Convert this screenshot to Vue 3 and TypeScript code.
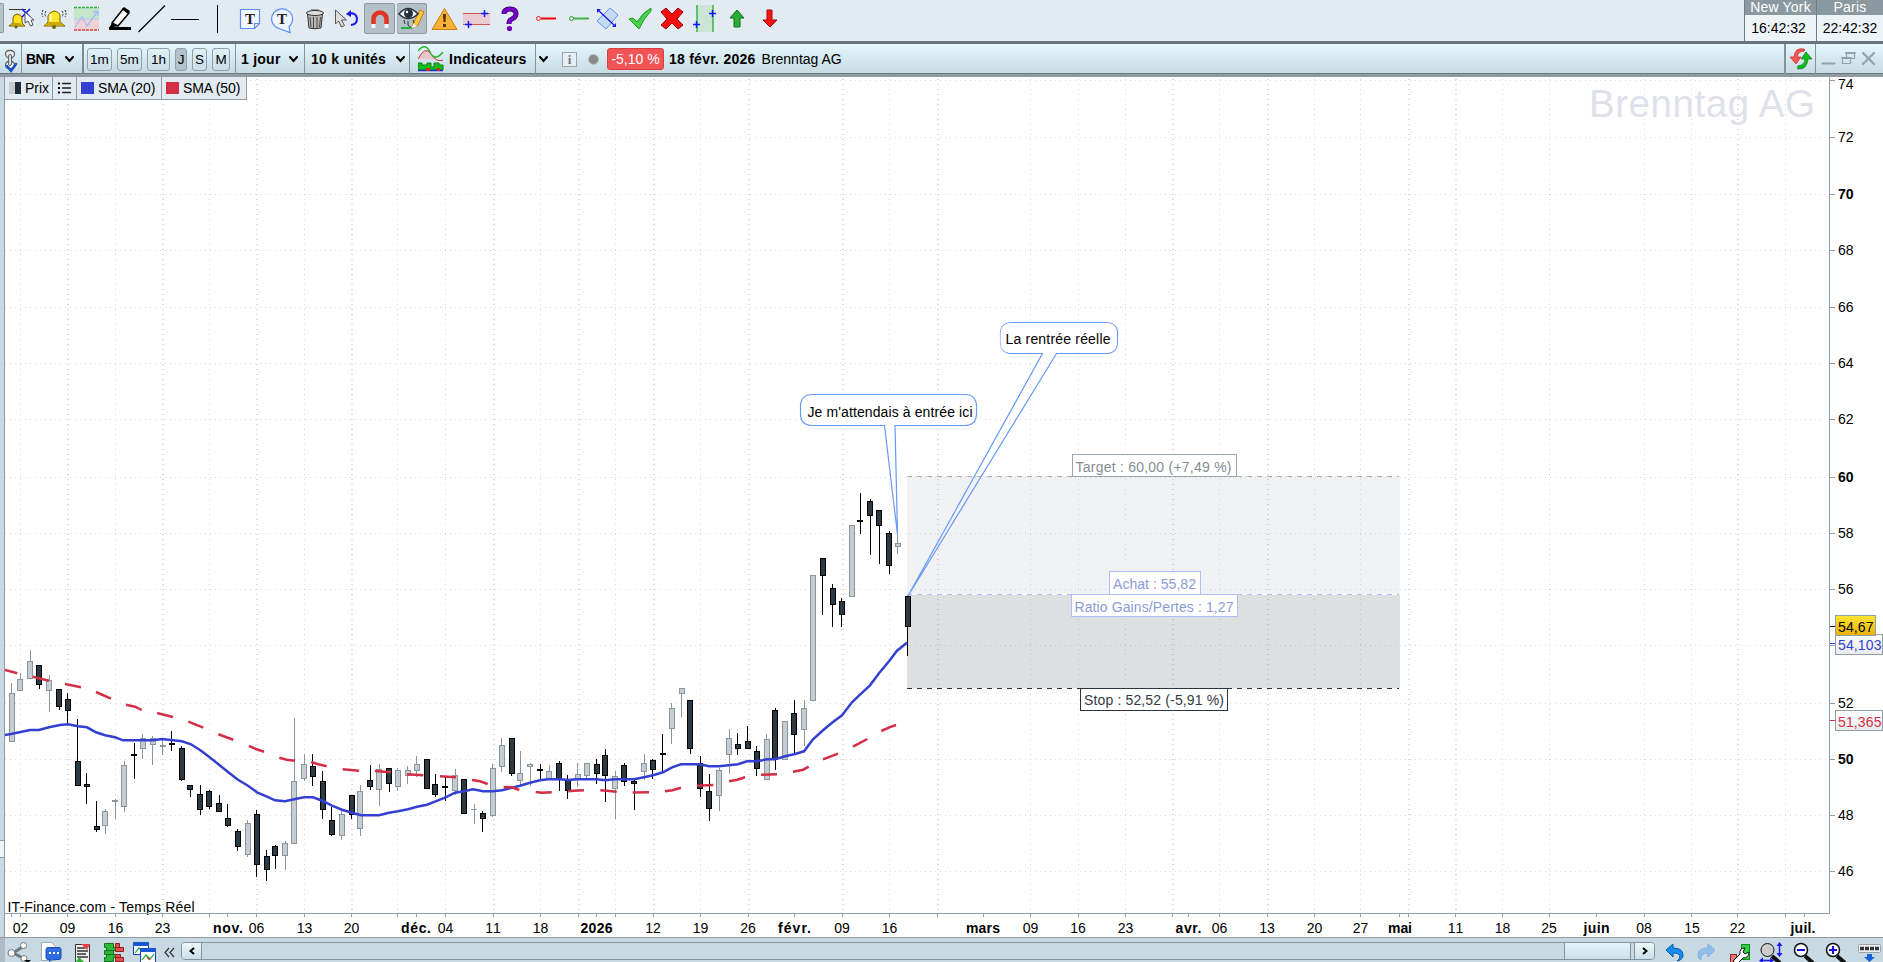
<script setup lang="ts">
type Candle = [left: number, wick: number, high: number, top: number, bottom: number, low: number, up: 0 | 1]
type Label = { x: number; text: string; bold?: boolean; w: number }

const candles: Candle[] = [
  [9, 11, 683, 693, 742, 742, 1], [17, 20, 673, 679, 691, 691, 1], [27, 30, 650, 661, 679, 679, 1],
  [36, 39, 665, 665, 685, 689, 0], [46, 49, 675, 680, 691, 712, 1], [56, 59, 689, 689, 707, 710, 0],
  [65, 67, 693, 699, 711, 724, 0], [75, 77, 719, 761, 786, 786, 0], [84, 86, 773, 784, 787, 804, 0],
  [94, 96, 801, 826, 830, 832, 0], [102, 105, 809, 811, 826, 834, 1], [112, 115, 799, 800, 802, 819, 1],
  [121, 124, 761, 765, 807, 812, 1], [131, 134, 743, 754, 756, 779, 0], [140, 142, 734, 738, 749, 759, 1],
  [150, 152, 736, 738, 745, 765, 1], [160, 162, 738, 745, 747, 755, 1], [169, 171, 731, 743, 745, 751, 0],
  [179, 181, 746, 748, 780, 781, 0], [187, 190, 785, 785, 790, 797, 0], [197, 200, 785, 794, 810, 815, 0],
  [206, 209, 790, 791, 807, 809, 0], [216, 219, 795, 803, 812, 812, 0], [225, 227, 804, 818, 826, 827, 0],
  [235, 237, 829, 831, 847, 851, 0], [245, 247, 820, 823, 855, 857, 1], [254, 256, 810, 814, 865, 877, 0],
  [264, 266, 850, 856, 870, 881, 0], [272, 275, 845, 846, 856, 869, 0], [282, 285, 841, 843, 856, 870, 1],
  [291, 294, 718, 781, 844, 844, 1], [301, 304, 754, 764, 779, 781, 1], [310, 312, 754, 766, 777, 786, 0],
  [320, 322, 771, 781, 810, 819, 0], [329, 331, 807, 820, 835, 836, 0], [339, 341, 811, 814, 836, 840, 1],
  [349, 351, 795, 795, 815, 819, 0], [357, 360, 785, 791, 829, 836, 1], [367, 370, 765, 780, 787, 790, 0],
  [376, 379, 764, 769, 790, 806, 1], [386, 389, 768, 768, 784, 792, 0], [395, 397, 768, 770, 787, 791, 1],
  [405, 407, 766, 770, 776, 784, 1], [414, 416, 756, 764, 771, 777, 1], [424, 426, 759, 759, 789, 789, 0],
  [432, 435, 774, 784, 795, 797, 0], [442, 445, 777, 786, 788, 801, 0], [452, 455, 769, 775, 791, 795, 1],
  [461, 464, 779, 779, 814, 814, 0], [471, 474, 804, 809, 810, 824, 1], [480, 482, 811, 813, 819, 832, 0],
  [490, 492, 764, 768, 816, 817, 1], [499, 501, 738, 745, 767, 772, 1], [509, 511, 738, 738, 774, 776, 0],
  [517, 520, 751, 773, 781, 786, 1], [527, 530, 763, 764, 767, 786, 1], [537, 540, 764, 769, 771, 779, 0],
  [546, 549, 765, 771, 779, 780, 1], [556, 559, 761, 763, 779, 791, 0], [565, 567, 775, 779, 791, 799, 0],
  [575, 577, 763, 774, 780, 787, 1], [584, 586, 763, 763, 776, 780, 1], [594, 596, 759, 764, 774, 784, 0],
  [602, 605, 749, 755, 776, 802, 0], [612, 615, 771, 776, 789, 819, 1], [621, 624, 763, 765, 782, 786, 0],
  [631, 634, 780, 781, 784, 810, 0], [641, 644, 754, 763, 772, 780, 1], [650, 652, 759, 760, 770, 779, 0],
  [660, 662, 734, 753, 755, 772, 0], [669, 671, 703, 708, 729, 744, 1], [679, 681, 688, 688, 694, 717, 1],
  [687, 690, 700, 700, 749, 754, 0], [697, 700, 756, 763, 789, 797, 0], [706, 709, 774, 791, 809, 821, 0],
  [716, 719, 768, 770, 796, 811, 1], [726, 729, 729, 738, 755, 774, 1], [735, 737, 733, 744, 749, 755, 0],
  [745, 747, 726, 741, 749, 749, 0], [754, 756, 746, 751, 769, 776, 0], [764, 766, 734, 739, 780, 780, 1],
  [772, 775, 708, 710, 760, 770, 0], [782, 785, 721, 721, 760, 760, 1], [791, 794, 700, 713, 735, 755, 0],
  [801, 804, 700, 708, 730, 746, 1], [810, 812, 575, 575, 701, 701, 1], [820, 822, 558, 558, 576, 615, 0],
  [830, 832, 584, 588, 605, 627, 0], [839, 841, 598, 601, 615, 627, 0], [849, 851, 525, 525, 597, 597, 1],
  [857, 860, 493, 520, 522, 534, 0], [867, 870, 499, 501, 516, 555, 0], [876, 879, 510, 510, 526, 564, 0],
  [886, 889, 531, 533, 566, 574, 0], [895, 897, 534, 543, 547, 554, 1], [905, 907, 596, 596, 627, 656, 0],
]

const sma20 =
  '5,735 11,734 30,730 39,730 49,727.3 60,725 68,724.3 78,726.3 87,727.3 96,732.3 105,735.3 115,737.3 123,740.3 153,740.3 162,739 182,741.3 191,744.3 200,750 209,756.7 219,764.7 228,772 238,779.7 248,785.7 257,792.3 267,796.7 275,800.3 285,801.3 294,799.3 304,797.3 313,797.3 323,801 332,805.7 342,809.7 352,812.7 361,815.3 379,815.3 389,812.7 398,811.3 408,809.3 417,806.7 427,804.7 435,801.7 445,797.7 455,792.7 464,791.3 473,789.3 483,791.3 493,791.3 502,790.3 520,785.7 530,782.7 540,780.3 548,779.3 560,779.3 568,780 577,779.3 597,779.3 605,780.3 615,779.3 634,779.3 644,777.3 653,775.3 663,772.3 672,767.3 681,764.3 700,764.3 709,766.3 719,766.3 738,764.3 747,761.3 757,761.3 767,759.3 775,759.3 785,756.3 794,754.3 804,751.3 813,739.3 823,730.3 832,722.7 842,715.3 852,702.3 860,694.7 870,685.3 879,673.3 889,661.3 897,650.7 907,642.7'

const sma50 = [
  '5,670 17.3,673.3', '33,676.7 49,680.7', '65,684 81,687.3', '96,692 111,698.7', '126,704.7 135,706.7 141.7,710',
  '157,713 173,717', '188.3,721.7 203.3,727.7', '218.3,734.3 233.3,739.7', '249,746 256.7,749.3 264,751.7',
  '279.3,757.7 286.7,759.7 295,760.7', '311,762 318.3,764.3 326.7,766.3', '342.7,769.3 359,770.7', '375,771 391,772.3',
  '407,774.3 423.3,775.3', '440,776.3 456,777.3', '472,780 480,781.3 487.7,784', '503.7,787 511.7,787.3 519.3,790',
  '535.7,792 541.7,792.7 551.7,792.3', '568.3,791.3 573.3,790.7 584,790.3', '600.3,790.3 606.7,790.7 616.7,791.7',
  '632.7,792.5 649,792.3', '665,791.3 672.3,790.3 681,787.7', '697,785.7 713.3,785', '729,781.3 737.3,779.7 745,777.3',
  '761,774.7 777,774.3', '793,771.7 803.3,769.7 808.7,766.7', '823,759.3 838,753.7', '853,746.7 867.3,739', '881.3,731 889.3,727.3 896,725',
]

const prices = [
  { v: 74, y: 80 }, { v: 72, y: 137 }, { v: 70, y: 194 }, { v: 68, y: 250 }, { v: 66, y: 307 }, { v: 64, y: 363 },
  { v: 62, y: 419 }, { v: 60, y: 477 }, { v: 58, y: 533 }, { v: 56, y: 589 }, { v: 54, y: 645 }, { v: 52, y: 703 },
  { v: 50, y: 759 }, { v: 48, y: 815 }, { v: 46, y: 871 },
]

const thinCols = [20, 115, 209, 304, 397, 445, 540, 615, 700, 889, 1030, 1078, 1125, 1219, 1314, 1360, 1502, 1549, 1644, 1691, 1785]
const wideCols = [67, 162, 256, 351, 493, 578, 653, 748, 842, 937, 1172, 1267, 1408, 1455, 1737]
const gridCols = [
  ...thinCols.map((x) => ({ x, w: 1 })),
  ...wideCols.map((x) => ({ x, w: 2 })),
]

const dates: Label[] = (
  [
    [20.5, '02'], [67.5, '09'], [115.5, '16'], [162.5, '23'], [228, 'nov.', 30], [256.5, '06'], [304.5, '13'], [351.5, '20'],
    [416, 'déc.', 30], [445.5, '04'], [493, '11'], [540.5, '18'], [596.5, '2026', 32], [653, '12'], [700.5, '19'], [748, '26'],
    [794.5, 'févr.', 33], [842, '09'], [889.5, '16'], [983, 'mars', 34], [1030.5, '09'], [1078, '16'], [1125.5, '23'],
    [1188.5, 'avr.', 26], [1219.5, '06'], [1267, '13'], [1314.5, '20'], [1360.5, '27'], [1400, 'mai', 24], [1455.5, '11'],
    [1502.5, '18'], [1549, '25'], [1596.5, 'juin', 26], [1644, '08'], [1692, '15'], [1737.5, '22'], [1803, 'juil.', 25],
  ] as [number, string, number?][]
).map(([x, text, w]) => ({ x, text, bold: !!w, w: w ?? 15.5 }))

const ticks = [11, 20, 67, 115, 162, 209, 227, 256, 304, 351, 397, 416, 445, 493, 540, 578, 596, 615, 653, 700, 748, 794, 842, 889, 937, 983, 1030, 1078, 1125, 1172, 1188, 1219, 1267, 1314, 1360, 1399, 1408, 1455, 1502, 1549, 1596, 1644, 1691, 1737, 1785, 1804]

const periods = [
  { t: '1m', c: 'p-1m' }, { t: '5m', c: 'p-5m' }, { t: '1h', c: 'p-1h' }, { t: 'J', c: 'p-j' }, { t: 'S', c: 'p-s' }, { t: 'M', c: 'p-m' },
]
</script>

<template>
  <div class="app">
    <header class="tools">
      <span class="tab-edge"></span>
      <svg width="33" height="41" viewBox="5 0 33 41">
        <path d="M9 26l4-3v-5q0-3 4-4 5 1 5 4v5l3 3z" fill="#ffe21a" stroke="#6d5a00" />
        <path d="M9 25l4-2h7l3 2z" fill="#c9a400" /><circle cx="16" cy="27" r="1.5" fill="#705c00" />
        <path d="M9 9.500h17" stroke="#333" /><path d="M22 9l8 8M30 9l-8 8" stroke="#1414ff" stroke-width="1.600" />
        <path d="M25 12v11l3-2 2.500 5 2.500-1-2-5h3z" fill="#fff" stroke="#555" />
      </svg>
      <svg width="32" height="41" viewBox="38 0 32 41">
        <path d="M44 26l4-4v-6q1-4 6-5 6 1 6 5v6l5 4z" fill="#ffe52e" stroke="#7b6500" />
        <path d="M44 25l5-3h10l5 3z" fill="#cfa800" /><path d="M50.500 14v7" stroke="#fffbc0" stroke-width="2" /><circle cx="54" cy="27" r="2" fill="#7b6500" />
        <path d="M46 11q-2 3 0 6M43 10q-2 4 0 7M62 11q2 3 0 6M65 10q2 4 0 7" fill="none" stroke="#333" stroke-dasharray="2 1" />
      </svg>
      <svg width="33" height="41" viewBox="70 0 33 41">
        <path d="M74 8h25v11H74z" fill="#c5e6c9" /><path d="M74 19h25v11H74z" fill="#efd2d6" />
        <path d="M74 7.500h25" stroke="#2fb53c" stroke-dasharray="3 1" stroke-width="1.500" /><path d="M74 30h25" stroke="#e84040" stroke-dasharray="3 1" stroke-width="1.500" />
        <path d="M74 19h25" stroke="#aac4f5" stroke-dasharray="3 1" /><path d="M75 27l7-10 5 9 11-15M93 12l5-1 0 5" fill="none" stroke="#a5bdf8" stroke-width="1.300" />
      </svg>
      <svg width="31" height="41" viewBox="103 0 31 41">
        <path d="M112 23l11-14 6 4-11 13z" fill="#fff" stroke="#000" stroke-width="1.500" /><path d="M122 9l2-2 6 4-2 3z" /><path d="M109 28l3-5 6 3zM109 27h22v3h-22z" />
      </svg>
      <svg width="34" height="41" viewBox="134 0 34 41"><path d="M138.500 32l26.500-26.500" stroke="#000" stroke-width="1.300" /></svg>
      <svg width="34" height="41" viewBox="168 0 34 41"><path d="M171 19.500h28" stroke="#000" /></svg>
      <svg width="31" height="41" viewBox="202 0 31 41"><path d="M217.500 5v28" stroke="#000" /></svg>
      <svg width="32" height="41" viewBox="233 0 32 41">
        <path d="M240.500 9.500h19v14l-5 5h-14zM254.500 28.500v-5h5" fill="#f2f7ff" stroke="#5b8df5" stroke-width="1.200" />
        <text x="250" y="24" class="tglyph">T</text>
      </svg>
      <svg width="35" height="41" viewBox="265 0 35 41">
        <path d="M279 28.500a10.500 10 0 1 1 10-2l1 6z" fill="#eef5ff" stroke="#5b8df5" stroke-width="1.200" />
        <text x="282" y="24" class="tglyph">T</text>
      </svg>
      <svg width="30" height="41" viewBox="300 0 30 41">
        <path d="M307.500 14h15l-1.500 14q-6 1.500-12 0z" fill="#b8b8b6" stroke="#333" /><ellipse cx="315" cy="13" rx="8.500" ry="2.500" fill="#ddd" stroke="#333" /><path d="M311 10h8M310 17l1 10M313.500 17v11M317 17v11M320.500 17l-1 10" stroke="#444" fill="none" />
      </svg>
      <svg width="32" height="41" viewBox="330 0 32 41">
        <path d="M335.500 10v14l3-3 3 6 3-1.500-3-5.500h5z" fill="#dcdcdc" stroke="#555" /><path d="M349 13.500q7-1 8 5 0 6-6 6.500" fill="none" stroke="#1717f0" stroke-width="2" /><path d="M346 14l5-4v7z" fill="#1717f0" />
      </svg>
      <svg width="35" height="41" viewBox="362 0 35 41">
        <rect x="364.500" y="3.500" width="30" height="30" rx="1.500" fill="#b3c0c8" stroke="#8d999f" />
        <path d="M373.500 24v-5a6.500 6.500 0 0 1 13 0v5" fill="none" stroke="#e03524" stroke-width="4.500" /><path d="M371.500 24h4v4h-4zM384.500 24h4v4h-4z" fill="#f3f3f3" />
      </svg>
      <svg width="32" height="41" viewBox="397 0 32 41">
        <rect x="397" y="3.500" width="29.500" height="30" rx="1.500" fill="#b3c0c8" stroke="#8d999f" />
        <path d="M413 24l7-14 4 2-6 13-6 3z" fill="#ffc83d" stroke="#c67b12" /><path d="M412 28l1-4 4 2z" fill="#fff" />
        <path d="M399 14q9-11 19 0-10 9-19 0z" fill="#f5f8fa" stroke="#26323a" stroke-width="1.500" /><circle cx="408.500" cy="13.500" r="4.500" fill="#26323a" /><circle cx="407" cy="12" r="1.200" fill="#fff" />
        <path d="M404 20l1 4M408 21v4q2 3 3 2M413 20l1 3" fill="none" stroke="#333" /><path d="M401 28h11" stroke="#24b143" stroke-width="2" />
      </svg>
      <svg width="32" height="41" viewBox="429 0 32 41"><path d="M444.500 8.500l12.500 21h-25z" fill="#f9b233" stroke="#c67d18" stroke-linejoin="round" /><path d="M443 14h3l-.5 8h-2zM443 24h3v3h-3z" fill="#4b3407" /></svg>
      <svg width="33" height="41" viewBox="461 0 33 41">
        <path d="M463 13h27v12h-27z" fill="#e9cdd3" /><path d="M463 13.500h27M463 24.500h27" stroke="#d85050" /><path d="M484.500 10v7M481 13.500h7M468.500 21v7M465 24.500h7" stroke="#1515ff" stroke-width="1.500" />
      </svg>
      <svg width="32" height="41" viewBox="494 0 32 41"><path d="M504 14q0-5 6-5 6 0 6 5 0 3-4 5-3 1-3 5" fill="none" stroke="#32006b" stroke-width="5" /><path d="M504 14q0-5 6-5 6 0 6 5 0 3-4 5-3 1-3 5" fill="none" stroke="#7600c4" stroke-width="3.500" /><circle cx="509.500" cy="28.500" r="2.600" fill="#6c00b5" /></svg>
      <svg width="36" height="41" viewBox="526 0 36 41"><circle cx="538.500" cy="18.500" r="2" fill="none" stroke="#e22" /><path d="M541 18.500h15" stroke="#f50000" stroke-width="2" /></svg>
      <svg width="30" height="41" viewBox="562 0 30 41"><circle cx="571.500" cy="18.500" r="2" fill="none" stroke="#2b9d31" /><path d="M574 18.500h15" stroke="#3cb043" stroke-width="2" /></svg>
      <svg width="30" height="41" viewBox="592 0 30 41">
        <path d="M610 8l8 7-12 14-9-8z" fill="#c4dbf6" stroke="#5f93f5" /><path d="M598 10l17 16" stroke="#1919f0" stroke-width="1.300" /><path d="M597 9h4l-4 4zM616 27h-4l4-4z" fill="#1919f0" />
      </svg>
      <svg width="34" height="41" viewBox="622 0 34 41"><path d="M629 19l4-1 4 4q6-10 14-14l0 3q-7 7-12 18z" fill="#46d146" stroke="#1d9827" stroke-linejoin="round" /></svg>
      <svg width="32" height="41" viewBox="656 0 32 41"><path d="M661 12l5-4 6 6 6-6 5 4-6 7 6 6-5 4-6-6-6 6-5-4 6-6z" fill="#f50d0d" stroke="#9b0b0b" stroke-linejoin="round" /></svg>
      <svg width="32" height="41" viewBox="688 0 32 41">
        <path d="M697 5h16v27h-16z" fill="#cbe4d5" /><path d="M697 5v27M713 5v27" stroke="#27b537" stroke-width="1.400" /><path d="M712.500 10v7M709 13.500h7M696.500 21v7M693 24.500h7" stroke="#1515ff" stroke-width="1.500" />
      </svg>
      <svg width="33" height="41" viewBox="720 0 33 41"><path d="M737 10l7 8h-4v9h-6v-9h-4z" fill="#27ae33" stroke="#126b1b" stroke-linejoin="round" /></svg>
      <svg width="32" height="41" viewBox="753 0 32 41"><path d="M770 27l-7-7h4v-10h5v10h5z" fill="#fa1111" stroke="#a50808" stroke-linejoin="round" /></svg>
      <div class="clocks">
        <div class="clock ny"><b>New York</b><span>16:42:32</span></div>
        <div class="clock"><b>Paris</b><span>22:42:32</span></div>
      </div>
    </header>

    <nav class="bar">
      <div class="cell link">
        <svg width="21" height="30" viewBox="0 44 21 30">
          <g fill="#eee" stroke="#5d666b" stroke-width="1.300"><rect x="5.500" y="50.500" width="9" height="7" rx="3.500" /><rect x="5.500" y="61.500" width="9" height="7" rx="3.500" /></g><rect x="8.500" y="54.500" width="3" height="11" rx="1.500" fill="#ddd" stroke="#5d666b" />
          <path d="M7 66l4 5 5-7" fill="none" stroke="#1550c8" stroke-width="2.500" />
        </svg>
      </div>
      <div class="cell sym"><b>BNR</b><svg width="9" height="7" viewBox="0 0 9 7"><path d="M1 1l3.500 4L8 1" /></svg></div>
      <div class="cell periods"><span v-for="p in periods" :key="p.t" :class="['period', p.c]">{{ p.t }}</span></div>
      <div class="cell day"><b>1 jour</b><svg width="9" height="7" viewBox="0 0 9 7"><path d="M1 1l3.500 4L8 1" /></svg></div>
      <div class="cell units"><b>10 k unités</b><svg width="9" height="7" viewBox="0 0 9 7"><path d="M1 1l3.500 4L8 1" /></svg></div>
      <div class="cell ind">
        <svg class="indicon" width="26" height="26" viewBox="418 47 26 26">
          <path d="M418 60q7-14 13-5t12 6" fill="#e7c6cc" stroke="#cf3040" /><path d="M418 52q7-9 12 1t13 0" fill="none" stroke="#27b327" stroke-width="1.400" />
          <path d="M418 71v-7h4v2h5v-2h4v4h3v-4h5v2h4v5z" fill="#10c010" stroke="#0a7d1a" /><path d="M418 71.500h25" stroke="#1732d8" stroke-width="1.500" /><path d="M426 69h4v3h-4zM437 69h3v3h-3z" fill="#d22" />
        </svg>
        <b>Indicateurs</b>
      </div>
      <div class="cell quote">
        <svg width="9" height="7" viewBox="0 0 9 7"><path d="M1 1l3.500 4L8 1" /></svg>
        <span class="info">i</span><i class="dot"></i><span class="pct">-5,10 %</span><b class="date">18 févr. 2026</b><span class="name">Brenntag AG</span>
      </div>
      <div class="cell sync">
        <svg width="24" height="24" viewBox="0 0 24 24">
          <path d="M15 2Q6 0 5 10H1l6 7 5-7H8q1-6 7-6z" fill="#f55" stroke="#b22" stroke-width=".7" /><path d="M9 22q9 1 10-10h4l-6-7-5 7h4q0 6-7 7z" fill="#0fbd1e" stroke="#0a7b14" stroke-width=".7" />
        </svg>
      </div>
      <div class="cell win">
        <svg width="66" height="30" viewBox="1816 44 66 30" fill="none" stroke="#93a2a9">
          <path d="M1822.500 63.500h12" stroke-width="2" /><path d="M1846.500 52.500h8v6h-8z" stroke-width="1.200" /><path d="M1842.500 57.500h8v6h-8z" fill="#d5e7ee" stroke-width="1.200" /><path d="M1842 58h9M1846 53h9" stroke-width="1.800" /><path d="M1863 53l11 11M1874 53l-11 11" stroke-width="2.200" />
        </svg>
      </div>
    </nav>

    <main class="body">
      <aside class="strip"><span></span></aside>
      <div class="stage">
        <svg class="chart" width="1878" height="860" viewBox="5 77 1878 860">
          <defs>
            <linearGradient id="gold" x1="0" y1="0" x2="0" y2="1"><stop offset="0" stop-color="#ffe632" /><stop offset="1" stop-color="#eab008" /></linearGradient>
            <linearGradient id="tag" x1="0" y1="0" x2="0" y2="1"><stop offset="0" stop-color="#fff" /><stop offset="1" stop-color="#e8eaec" /></linearGradient>
          </defs>
          <g shape-rendering="crispEdges" stroke="#dbdbde">
            <path v-for="g in gridCols" :key="g.x" :d="`M${g.x + g.w / 2} 79V912`" :stroke-width="g.w" stroke-dasharray="1 4" />
            <path v-for="p in prices" :key="p.v" :d="`M5 ${p.y + 0.5}H1828`" stroke-dasharray="1 4" />
          </g>
          <text x="1589" y="116.500" textLength="226" class="mark">Brenntag AG</text>

          <g shape-rendering="crispEdges">
            <rect x="907" y="476" width="493" height="119" fill="#8c94a0" fill-opacity=".12" />
            <rect x="907" y="595" width="493" height="93" fill="#3c4048" fill-opacity=".17" />
            <path d="M907 476.500h492" stroke="#a9b0b6" stroke-dasharray="5 5" /><path d="M907 594.500h492" stroke="#fff" /><path d="M907 594.500h492" stroke="#aebff5" stroke-dasharray="5 5" /><path d="M907 688.500h492" stroke="#2a343e" stroke-dasharray="5 5" />
          </g>

          <g shape-rendering="crispEdges">
            <g v-for="(c, i) in candles" :key="i">
              <rect :x="c[1]" :y="c[2]" width="1" :height="c[5] - c[2]" :fill="c[6] ? '#8b969c' : '#000'" />
              <rect :x="c[0]" :y="c[3]" width="6" :height="c[4] - c[3]" :fill="c[6] ? '#8b969c' : '#000'" />
              <rect v-if="c[4] - c[3] > 2" :x="c[0] + 1" :y="c[3] + 1" width="4" :height="c[4] - c[3] - 2" :fill="c[6] ? '#c4cdd4' : '#2c3a44'" />
            </g>
          </g>
          <polyline :points="sma20" fill="none" stroke="#3340d2" stroke-width="2.500" />
          <polyline v-for="s in sma50" :key="s" :points="s" fill="none" stroke="#d22f45" stroke-width="2.500" />

          <g fill="#fff" stroke="#6699fb" stroke-width="1.200">
            <path d="M812.500 394.500h152q12 0 12 12v7q0 12-12 12h-69.500l2.500 109-13-109h-72q-12 0-12-12v-7q0-12 12-12z" />
            <path d="M1012.500 322.500h93q12 0 12 11v8q0 12-12 12h-49l-148.500 242.500 134.500-242.500h-30q-12 0-12-12v-8q0-11 12-11z" fill="none" />
            <path d="M1012.500 323h93q11.500 0 11.500 11v8q0 11-12 11h-93q-11.500 0-11.500-11v-8q0-11 12-11z" stroke="none" />
          </g>
          <text x="807.500" y="417" textLength="165">Je m'attendais à entrée ici</text>
          <text x="1005.500" y="344" textLength="105">La rentrée réelle</text>

          <g fill="#fff" shape-rendering="crispEdges">
            <rect x="1072.500" y="454.500" width="164" height="22" stroke="#9aa4ac" /><rect x="1109.500" y="571.500" width="91" height="23" stroke="#aebff5" />
            <rect x="1071.500" y="594.500" width="166" height="22" stroke="#aebff5" /><rect x="1080.500" y="688.500" width="147" height="22" stroke="#2a343e" />
          </g>
          <text x="1075.500" y="472" textLength="156" fill="#858c92">Target : 60,00 (+7,49 %)</text>
          <text x="1113" y="589" textLength="83" fill="#8b9bd6">Achat : 55,82</text>
          <text x="1074.500" y="612" textLength="159" fill="#8b9bd6">Ratio Gains/Pertes : 1,27</text>
          <text x="1084" y="705" textLength="140" fill="#333a44">Stop : 52,52 (-5,91 %)</text>
          <text x="7.500" y="912" textLength="187">IT-Finance.com - Temps Réel</text>

          <g shape-rendering="crispEdges" stroke="#929ea5" fill="none">
            <path d="M5 913.500H1829.500V77" />
            <path v-for="t in ticks" :key="t" :d="`M${t + 0.5} 914v3`" />
            <path v-for="p in prices" :key="p.v" :d="`M1830 ${p.y + 0.5}h5`" />
            <path d="M1830 626.500h5" stroke="#000" /><path d="M1830 643.500h5" stroke="#3340d2" /><path d="M1830 720.500h5" stroke="#d22f45" />
          </g>
          <template v-for="p in prices" :key="p.v">
            <text v-if="p.v !== 54" x="1838" :y="p.y + 5 + (p.v === 74 ? 4 : 0)" textLength="15.500" :class="{ bold: p.v % 10 === 0 }">{{ p.v }}</text>
          </template>
          <g shape-rendering="crispEdges" stroke="#929ea5">
            <rect x="1835.500" y="634.500" width="47" height="20" fill="url(#tag)" /><rect x="1835.500" y="615.500" width="40" height="20" fill="url(#gold)" /><rect x="1835.500" y="710.500" width="47" height="20" fill="url(#tag)" />
          </g>
          <text x="1838" y="632" textLength="35.500">54,67</text>
          <text x="1838" y="650" textLength="43.500" fill="#3340d2">54,103</text>
          <text x="1838" y="727" textLength="43.500" fill="#d22f45">51,365</text>
          <text v-for="d in dates" :key="d.x" :x="d.x - d.w / 2" y="933" :textLength="d.w" :class="{ bold: d.bold }">{{ d.text }}</text>
        </svg>
        <div class="legend">
          <span class="lg prix"><i class="half"></i>Prix</span>
          <span class="lg list"><svg width="14" height="12" viewBox="0 0 14 12"><path d="M0 1.500h2M0 6h2M0 10.500h2" stroke="#000" stroke-width="2" /><path d="M4 1.500h9M4 6h9M4 10.500h9" stroke="#222" stroke-width="1.500" /></svg></span>
          <span class="lg s20"><i class="sw blue"></i>SMA (20)</span>
          <span class="lg s50"><i class="sw red"></i>SMA (50)</span>
        </div>
      </div>
    </main>

    <footer class="foot">
      <span class="corner"></span>
      <svg width="176" height="24" viewBox="5 938 176 24">
        <g fill="#fff" stroke="#6e777c"><path d="M13 953l11-7M13 953l12 6" stroke-width="3" /><circle cx="11.500" cy="953" r="3.500" /><circle cx="23.500" cy="945.500" r="3" /><circle cx="24" cy="958.500" r="3" /></g><path d="M24 960h7l-3.500 3z" />
        <path d="M41.500 942.500h10l4 4v14h-14z" fill="#fff" stroke="#a6adb1" /><rect x="46" y="947.500" width="15" height="12" rx="2" fill="#2f6de0" stroke="#1a4fb3" /><path d="M50 959l-2 4 6-4z" fill="#2f6de0" /><path d="M49 953h2M53 953h2M57 953h2" stroke="#fff" stroke-width="2" />
        <path d="M75.500 944.500h14v18h-14z" fill="#eee" stroke="#333" /><path d="M77 948h8M77 951h11M77 954h9M77 957h11" stroke="#333" stroke-width="1.500" /><path d="M81 944h9l-3 6z" fill="#e33f4a" /><path d="M76 962l3-5 5 5z" fill="#2eae38" />
        <path d="M104.500 943.500h9v4h2v3h-2v4h2v3h-2v4h-9v-4h2v-3h-2v-4h2v-3h-2z" fill="#2cb93a" stroke="#10751c" /><path d="M105 950.500h10M105 954.500h10" stroke="#10751c" /><path d="M115.500 943.500h4v4h-4zM115.500 947.500h8v4h-8zM115.500 954.500h5v3h-5zM115.500 957.500h8v4h-8z" fill="#e05050" stroke="#941f1f" />
        <path d="M133.500 943.500h15v11h-15z" fill="#fff" stroke="#1640b5" /><path d="M133 942h16v4h-16z" fill="#1a56cf" /><path d="M135 953l4-5 4 4" fill="none" stroke="#1a3" stroke-width="1.200" /><path d="M140.500 949.500h15v13h-15z" fill="#fff" stroke="#1640b5" /><path d="M140 948h16v4h-16z" fill="#1a56cf" /><path d="M142 960l4-5 4 4 4-5" fill="none" stroke="#1a3" stroke-width="1.200" /><path d="M147 957l3 3" stroke="#d22" stroke-width="1.300" />
        <path d="M169 948l-4 4.500 4 4.500M174 948l-4 4.500 4 4.500" fill="none" stroke="#333" stroke-width="1.200" />
      </svg>
      <div class="scroll">
        <span class="sbtn"><svg width="6" height="8" viewBox="0 0 6 8"><path d="M5 1L1.500 4 5 7" /></svg></span>
        <span class="track"></span><span class="thumb"></span><span class="gap"></span>
        <span class="sbtn"><svg width="6" height="8" viewBox="0 0 6 8"><path d="M1 1l3.500 3L1 7" /></svg></span>
      </div>
      <svg width="228" height="24" viewBox="1655 938 228 24">
        <path d="M1666 950l7-6v4q10 0 10 7 0 5-6 6 3-2 3-5-1-3-7-3v4z" fill="#168ef0" stroke="#0757ae" />
        <path d="M1715 950l-7-6v4q-10 0-10 7 0 4 3 5-1-7 7-7v4z" fill="#8fc0ea" stroke="#89aee0" />
        <rect x="1730.500" y="954.500" width="6" height="8" fill="#f07878" stroke="#962222" /><rect x="1741.500" y="944.500" width="8" height="15" fill="#36d044" stroke="#108a1d" /><path d="M1733 961l7-7q-1-6 5-6l-2 4 2 2 4-2q0 6-6 6l-6 6z" fill="#fff" stroke="#111" />
        <g stroke="#111"><path d="M1772 956l8 7M1805 956l8 7M1837 956l8 7" stroke-width="4" /><circle cx="1767.500" cy="950" r="6.500" fill="#ccc" /><circle cx="1801" cy="950" r="6.500" fill="#fff" stroke-width="1.500" /><circle cx="1833" cy="950" r="6.500" fill="#fff" stroke-width="1.500" /></g>
        <path d="M1779.500 944v11M1762 960.500h10" stroke="#1717f0" stroke-width="1.500" /><path d="M1779.500 942l3 4h-6zM1779.500 957l3-4h-6zM1759 960.500l4-3v6zM1774 960.500l-4-3v6z" fill="#1717f0" />
        <path d="M1797 950h8M1829 950h8M1833 946v8" stroke="#1212e8" stroke-width="2.200" />
        <rect x="1858.500" y="944.500" width="22" height="8" rx="1" fill="#eef1f3" stroke="#9aa3a8" /><path d="M1860 948.500h19" stroke="#333" stroke-width="3.500" stroke-dasharray="4 1" /><path d="M1867 954h5v3h3l-5.500 5-5.500-5h3z" fill="#1660d6" />
      </svg>
    </footer>
  </div>
</template>

<style>
body { margin: 0; overflow: hidden; }
</style>

<style scoped>
.app { width: 1883px; height: 962px; display: flex; flex-direction: column; overflow: hidden; font: 14px/15px "Liberation Sans", Arial, sans-serif; color: #000; background: #fff; }
svg { display: block; flex: none; }
text { font: 14px "Liberation Sans", Arial, sans-serif; }
.bold { font-weight: 700; }
.mark { font-size: 38.500px; fill: #dfe1ea; }
.tglyph { font: 700 15px "Liberation Serif", serif; text-anchor: middle; fill: #222; }

.tools { height: 41px; flex: none; display: flex; background: #e3ebf2; border-bottom: 3px solid #69757b; }
.tab-edge { width: 4px; height: 30px; margin-top: 3px; box-sizing: border-box; background: #b5c2ca; border: solid #8d999f; border-width: 1px 1px 1px 0; border-radius: 0 2px 2px 0; margin-right: 1px; }
.clocks { margin-left: auto; display: flex; width: 139px; }
.clock { width: 66px; display: flex; flex-direction: column; text-align: center; border-left: 1px solid #6f7d84; background: #edf3f6; }
.clock.ny { width: 71px; }
.clock b { font-weight: 400; color: #fff; background: #8a999f; height: 16px; line-height: 15px; letter-spacing: .2px; }
.clock span { line-height: 27px; padding-right: 4px; }
.clock:not(.ny) span { padding: 0; }

.bar { height: 30px; flex: none; display: flex; background: linear-gradient(#e4f7fc, #c7d9e2); border-bottom: 3px solid #8f9ba1; box-shadow: inset 0 -1px #6d787e; }
.cell { box-sizing: border-box; display: flex; align-items: center; border-right: 1px solid #84929a; }
.cell > svg:not(.indicon) path { stroke-linecap: round; }
.cell b { letter-spacing: .25px; white-space: nowrap; }
.sym > svg, .day > svg, .units > svg, .quote > svg { fill: none; stroke: #000; stroke-width: 2; }
.link { width: 22px; }
.sym { width: 62px; padding-left: 4px; gap: 10px; border-right: 2px solid #7f8b91; }
.cell.sym b { letter-spacing: -.6px; }
.periods { width: 152px; padding-left: 3px; }
.period { box-sizing: border-box; height: 23px; line-height: 22px; text-align: center; border: 1px solid #90a0a8; border-radius: 3px; margin-right: 5px; font-size: 13.500px; }
.p-1m, .p-5m { width: 25px; } .p-1h { width: 23px; }
.p-j { width: 12px; background: #b4c2ca; } .p-s { width: 15px; } .p-m { width: 18px; margin-right: 0; }
.day { width: 69px; padding-left: 5px; gap: 8px; }
.units { width: 105px; padding-left: 6px; gap: 10px; }
.ind { width: 126px; padding-left: 8px; gap: 5px; }
.quote { flex: 1; padding-left: 3px; }
.info { width: 13px; height: 13px; margin-left: 14px; border: 1px solid #98a5ab; background: #e6f0f4; color: #70787d; font: 700 13px/13px "Liberation Serif", serif; text-align: center; }
.dot { width: 9px; height: 9px; border-radius: 50%; margin-left: 11px; background: #8a8a8a; border: 1px solid #b9c0c3; }
.pct { box-sizing: border-box; width: 57px; height: 22px; line-height: 21px; margin-left: 8px; border: 1px solid #d83f43; border-radius: 3px; background: #f25456; color: #fff; text-align: center; white-space: nowrap; }
.date { margin-left: 5px; } .name { margin-left: 6px; white-space: nowrap; }
.sync { width: 31px; border-left: 1px solid #84929a; justify-content: center; }
.win { width: 67px; border: 0; }

.body { height: 860px; flex: none; display: flex; }
.strip { width: 5px; box-sizing: border-box; background: #c8d9e3; border-right: 1px solid #8f9ba1; }
.strip span { display: block; height: 16px; margin-top: 763px; background: #eef5f8; border: solid #8f9ba1; border-width: 1px 0; }
.stage { flex: 1; position: relative; }
.legend { position: absolute; left: 0; top: 0; display: flex; height: 22px; background: #e3ebf2; border-bottom: 1px solid #8f9ba1; }
.lg { box-sizing: border-box; display: flex; align-items: center; gap: 4px; border-right: 1px solid #8f9ba1; padding-left: 4px; white-space: nowrap; }
.prix { width: 48px; } .list { width: 24px; padding-left: 5px; } .s20 { width: 85px; } .s50 { width: 85px; }
.s20, .s50 { letter-spacing: -.15px; }
.half { width: 12px; height: 12px; background: linear-gradient(90deg, #c4cdd4 50%, #1c2b35 50%); }
.sw { width: 13px; height: 12px; } .blue { background: #3340d2; } .red { background: #d22f45; }

.foot { height: 24px; flex: none; display: flex; border-top: 1px solid #8f9ba1; background: #c8d9e3; }
.corner { width: 5px; background: #aebbc3; }
.scroll { box-sizing: border-box; flex: 1; height: 18px; margin-top: 4px; display: flex; border: 1px solid #84929a; border-radius: 4px; background: #c8dae4; overflow: hidden; }
.sbtn { width: 19px; display: flex; align-items: center; justify-content: center; background: linear-gradient(#ecf9fc, #cbdfe8); }
.sbtn svg { fill: none; stroke: #000; stroke-width: 2; }
.track { flex: 1; border: solid #84929a; border-width: 0 1px; }
.thumb { width: 65px; background: linear-gradient(#e2f5fa, #cbdfe7); border-right: 1px solid #84929a; }
.gap { width: 3px; border-right: 1px solid #84929a; }
</style>
